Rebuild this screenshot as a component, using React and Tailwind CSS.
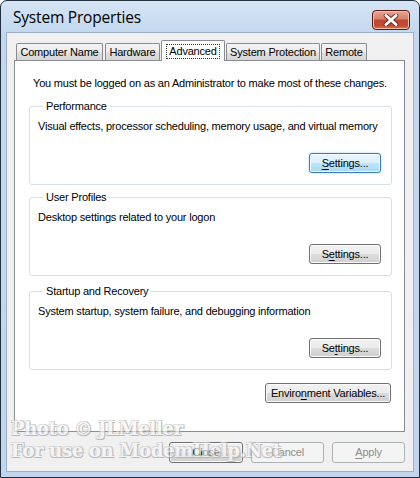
import React from "react";

const btnBase =
  "h-[20px] rounded-[3px] border flex items-center justify-center leading-none whitespace-nowrap";
const btnNormal =
  "border-[#707070] bg-[linear-gradient(to_bottom,#f2f2f2_0%,#ebebeb_50%,#dddddd_50%,#cfcfcf_100%)] shadow-[inset_0_0_0_1px_#fbfbfb] text-black";
const btnFocus =
  "border-[#3c7fb1] bg-[linear-gradient(to_bottom,#eaf6fd_0%,#d9f0fc_50%,#bee6fd_50%,#a7d9f5_100%)] shadow-[inset_0_0_0_1px_#f5fbff,0_0_2px_#7fc3ef] text-black";
const btnDisabled = "border-[#adb2b5] bg-[#f4f4f4] text-[#8d8d8d]";

function U({ children }) {
  return <span className="underline underline-offset-[2px] decoration-[1px]">{children}</span>;
}

function CloseX() {
  return (
    <div className="mt-[9px] mr-[4px] w-[38px] h-[20px] rounded-[4px] border border-[#5a1a12] bg-[linear-gradient(to_bottom,#e8a493_0%,#d7806c_45%,#c0452f_50%,#c34b33_80%,#d6745c_100%)] shadow-[inset_0_0_0_1px_#f2bfae] flex items-center justify-center">
      <svg width="16" height="12" viewBox="0 0 16 12">
        <path d="M3 1.5 L13 10.5 M13 1.5 L3 10.5" stroke="#6a2318" strokeWidth="4.6" strokeLinecap="round" />
        <path d="M3 1.5 L13 10.5 M13 1.5 L3 10.5" stroke="#ffffff" strokeWidth="3" strokeLinecap="round" />
      </svg>
    </div>
  );
}

function Tab({ w, ml, selected, children }) {
  if (selected) {
    return (
      <div
        className={`${w} ${ml} h-[21px] -mb-[1px] relative z-10 border border-b-0 border-[#898c95] rounded-t-[2px] bg-white flex items-start justify-center pt-[3px] whitespace-nowrap`}
      >
        <span className="border border-dotted border-[#333] px-[2px] leading-[13px]">{children}</span>
      </div>
    );
  }
  return (
    <div
      className={`${w} ${ml} h-[17px] border border-b-0 border-[#898c95] rounded-t-[2px] bg-[linear-gradient(to_bottom,#f4f4f4_0%,#ececec_50%,#dedede_55%,#d6d6d6_100%)] flex items-center justify-center leading-none whitespace-nowrap`}
    >
      {children}
    </div>
  );
}

function Group({ title, desc, btn, className }) {
  return (
    <fieldset
      className={`ml-[14px] w-[363px] border border-[#d5dfe5] rounded-[3px] pl-[8px] pr-[10px] pb-[11px] ${className}`}
    >
      <legend className="ml-[5px] px-[3px] leading-[14px] whitespace-nowrap">{title}</legend>
      <div className="mt-[6px] leading-[14px] whitespace-nowrap">{desc}</div>
      <div className="mt-[20px] flex justify-end">{btn}</div>
    </fieldset>
  );
}

export default function App() {
  return (
    <div className="w-[420px] h-[478px] bg-white">
      <div className="w-[420px] h-[478px] flex flex-col border border-[#22303f] rounded-t-[7px] bg-[linear-gradient(to_bottom,#d6e5f5_0px,#c3d8ef_31px,#c1d6ee_100%)] px-[5px] pb-[5px] font-['Liberation_Sans',Arial,sans-serif] text-[11px] tracking-[-0.2px] text-black">
        {/* title bar */}
        <div className="h-[31px] shrink-0 flex items-start justify-between">
          <div className="pl-[7px] pt-[9px] text-[15.5px] leading-none font-['Open_Sans',sans-serif] text-black">
            System Properties
          </div>
          <CloseX />
        </div>

        {/* client area */}
        <div className="h-[440px] relative bg-[#f0f0f0] border border-[#9cb1c8] flex flex-col">
          {/* tabs */}
          <div className="mt-[7px] h-[20px] flex items-end">
            <Tab w="w-[87px]" ml="ml-[9px]">Computer Name</Tab>
            <Tab w="w-[55px]" ml="ml-[2px]">Hardware</Tab>
            <Tab w="w-[64px]" ml="ml-[1px]" selected>Advanced</Tab>
            <Tab w="w-[94px]" ml="ml-[1px]">System Protection</Tab>
            <Tab w="w-[46px]" ml="ml-[1px]">Remote</Tab>
          </div>

          {/* panel */}
          <div className="ml-[7px] w-[391px] h-[372px] border border-[#898c95] bg-white flex flex-col">
            <div className="mt-[15px] ml-[18px] leading-[14px] whitespace-nowrap">
              You must be logged on as an Administrator to make most of these changes.
            </div>

            <Group
              className="mt-[9px]"
              title="Performance"
              desc="Visual effects, processor scheduling, memory usage, and virtual memory"
              btn={
                <div className={`${btnBase} ${btnFocus} w-[72px]`}>
                  <U>S</U>ettings...
                </div>
              }
            />
            <Group
              className="mt-[5px]"
              title="User Profiles"
              desc="Desktop settings related to your logon"
              btn={
                <div className={`${btnBase} ${btnNormal} w-[72px]`}>
                  S<U>e</U>ttings...
                </div>
              }
            />
            <Group
              className="mt-[8px]"
              title="Startup and Recovery"
              desc="System startup, system failure, and debugging information"
              btn={
                <div className={`${btnBase} ${btnNormal} w-[72px]`}>
                  Se<U>t</U>tings...
                </div>
              }
            />

            <div className="mt-[13px] mr-[13px] flex justify-end">
              <div className={`${btnBase} ${btnNormal} w-[126px]`}>
                Enviro<U>n</U>ment Variables...
              </div>
            </div>
          </div>

          {/* bottom buttons */}
          <div className="mt-[10px] pr-[8px] flex justify-end gap-[8px]">
            <div className={`${btnBase} h-[21px] ${btnNormal} border-[#3d3d3d] w-[74px]`}>Close</div>
            <div className={`${btnBase} h-[21px] ${btnDisabled} w-[73px]`}>Cancel</div>
            <div className={`${btnBase} h-[21px] ${btnDisabled} w-[73px]`}>
              <U>A</U>pply
            </div>
          </div>

          {/* watermark */}
          <div className="absolute left-[4px] top-[387px] pointer-events-none font-['DejaVu_Serif',serif] font-bold text-[18px] leading-[18px] tracking-[-0.3px] text-[#f6f6f6] [text-shadow:1px_1px_0_#a0a0a0,-1px_-1px_0_#d4d4d4,1px_-1px_0_#b8b8b8,-1px_1px_0_#b8b8b8] opacity-70 whitespace-nowrap">
            <div>Photo © JLMeller</div>
            <div className="mt-[4px]">For use on ModemHelp.Net</div>
          </div>
        </div>
      </div>
    </div>
  );
}
